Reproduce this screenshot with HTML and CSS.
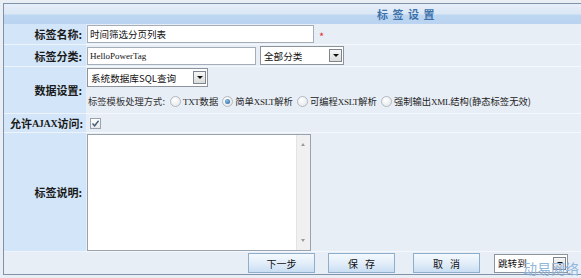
FILE: index.html
```html
<!DOCTYPE html>
<html lang="zh">
<head>
<meta charset="utf-8">
<title>标签设置</title>
<link rel="stylesheet" href="styles.css">
</head>
<body>
<div class="box">
  <div class="header">标 签 设 置</div>
  <div class="form">
    <div class="label r1">标签名称:</div>
    <div class="value r1">
      <span class="input w-name">时间筛选分页列表</span>
      <span class="req">*</span>
    </div>

    <div class="label r2">标签分类:</div>
    <div class="value r2">
      <span class="input w-tag mono">HelloPowerTag</span>
      <span class="select w-cat"><span class="sel-text">全部分类</span><span class="arrow"></span></span>
    </div>

    <div class="label r3">数据设置:</div>
    <div class="value r3 stack">
      <span class="select w-src"><span class="sel-text">系统数据库SQL查询</span><span class="arrow"></span></span>
      <div class="radios">
        <span class="rtitle">标签模板处理方式:</span>
        <span class="radio"></span><span class="rlabel"><span class="lat">TXT</span>数据</span>
        <span class="radio on"></span><span class="rlabel">简单<span class="lat">XSLT</span>解析</span>
        <span class="radio"></span><span class="rlabel">可编程<span class="lat">XSLT</span>解析</span>
        <span class="radio"></span><span class="rlabel">强制输出<span class="lat">XML</span>结构(静态标签无效)</span>
      </div>
    </div>

    <div class="label r4 wide">允许<span class="lat">AJAX</span>访问:</div>
    <div class="value r4">
      <span class="check">
        <svg width="9" height="9" viewBox="0 0 9 9"><path d="M1.5 4.5 L3.6 6.8 L7.6 1.8" fill="none" stroke="#4a5d78" stroke-width="1.4"/></svg>
      </span>
    </div>

    <div class="label r5">标签说明:</div>
    <div class="value r5">
      <div class="textarea">
        <div class="scroll">
          <span class="sarrow up"></span>
          <span class="sarrow down"></span>
        </div>
      </div>
    </div>

    <div class="footer">
      <span class="btn">下一步</span>
      <span class="btn spaced">保 存</span>
      <span class="btn spaced">取 消</span>
      <span class="select w-jump"><span class="sel-text">跳转到</span><span class="arrow"></span></span>
    </div>
  </div>
</div>
<div class="watermark">动易网络</div>
</body>
</html>
```

FILE: styles.css
```css
html, body {
  margin: 0;
  padding: 0;
}
body {
  width: 581px;
  height: 278px;
  overflow: hidden;
  background: #e9eef5;
  font-family: "Noto Sans CJK SC", "Liberation Sans", sans-serif;
  font-size: 10px;
  color: #111;
  position: relative;
}
.box {
  margin: 3px 0 0 3px;
  width: 578px;
  height: 270px;
  border: 1px solid #7f93ab;
  border-right: none;
  background: #e8eef6;
  overflow: hidden;
}
.header {
  height: 20px;
  line-height: 20px;
  background: linear-gradient(#e6eef9 0%, #dbe7f5 50%, #bdd6f1 55%, #b9d3f0 100%);
  color: #3e72ab;
  font-weight: bold;
  font-size: 11px;
  letter-spacing: 1px;
  padding-left: 373px;
  box-sizing: border-box;
  white-space: nowrap;
}
.form {
  display: grid;
  grid-template-columns: 82px 1fr;
  grid-template-rows: 21px 22px 47px 19px 119px 22px;
}
.label {
  background: #d3e5f8;
  border-bottom: 1px solid #eef4fb;
  font-weight: bold;
  padding-right: 4px;
  display: flex;
  align-items: center;
  justify-content: flex-end;
  white-space: nowrap;
  font-size: 11px;
  color: #1a1a1a;
}
.label.wide {
  padding-right: 3px;
}
.value {
  background: #e8eef6;
  border-bottom: 1px solid #f5f8fc;
  display: flex;
  align-items: center;
  padding-left: 1px;
  white-space: nowrap;
}
.value.stack {
  flex-direction: column;
  align-items: flex-start;
  justify-content: flex-start;
  padding-top: 1px;
  gap: 7px;
}
.input {
  display: inline-flex;
  align-items: center;
  height: 18px;
  box-sizing: border-box;
  background: #fff;
  border: 1px solid #a4adb8;
  padding-left: 2px;
  font-size: 9.5px;
  white-space: nowrap;
}
.w-name { width: 227px; }
.w-tag { width: 169px; }
.mono {
  font-family: "Liberation Serif", serif;
  font-size: 9px;
  letter-spacing: 0;
}
.req {
  color: #e0343a;
  margin-left: 5px;
  font-size: 11px;
  margin-top: 4px;
}
.select {
  display: inline-flex;
  align-items: center;
  justify-content: space-between;
  height: 19px;
  box-sizing: border-box;
  background: #fff;
  border: 1px solid #8d949c;
  padding: 0 1px 0 3px;
  font-size: 9.6px;
  white-space: nowrap;
}
.w-cat { width: 84px; margin-left: 4px; }
.w-src { width: 121px; }
.w-jump { width: 74px; margin-left: 14px; }
.arrow {
  width: 13px;
  height: 13px;
  flex: none;
  box-sizing: border-box;
  border: 1px solid #7d8590;
  background: linear-gradient(#f6f6f6, #dcdcdc);
  position: relative;
}
.arrow::after {
  content: "";
  position: absolute;
  left: 3px;
  top: 4px;
  border-left: 3px solid transparent;
  border-right: 3px solid transparent;
  border-top: 3px solid #111;
}
.radios {
  display: flex;
  align-items: center;
  font-size: 9.3px;
  color: #333;
  white-space: nowrap;
  padding-left: 1px;
}
.rtitle { margin-right: 5px; }
.radio {
  width: 11px;
  height: 11px;
  flex: none;
  box-sizing: border-box;
  border-radius: 50%;
  border: 1px solid #b4b9c0;
  background: radial-gradient(circle at 40% 35%, #ffffff, #dfe3e8);
  margin-right: 2px;
  position: relative;
}
.radio.on::after {
  content: "";
  position: absolute;
  left: 2px;
  top: 2px;
  width: 5px;
  height: 5px;
  border-radius: 50%;
  background: radial-gradient(circle at 40% 35%, #8fc0e6, #1d5c94);
}
.rlabel { margin-right: 4px; color: #222; }
.lat {
  font-family: "Liberation Serif", serif;
  font-size: 9px;
  letter-spacing: -0.3px;
}
.label .lat { font-weight: bold; font-size: 10px; }
.check {
  width: 11px;
  height: 11px;
  box-sizing: border-box;
  border: 1px solid #9aa3ad;
  background: linear-gradient(#ffffff, #e6e8ec);
  margin-left: 3px;
  display: inline-flex;
  align-items: center;
  justify-content: center;
}
.textarea {
  width: 224px;
  height: 117px;
  box-sizing: border-box;
  border: 1px solid #9aa3ad;
  background: #fff;
  display: flex;
  justify-content: flex-end;
}
.scroll {
  width: 13px;
  height: 100%;
  background: #f0f0f0;
  border-left: 1px solid #e4e4e4;
  position: relative;
}
.sarrow {
  position: absolute;
  left: 4px;
  border-left: 2px solid transparent;
  border-right: 2px solid transparent;
}
.sarrow.up { top: 8px; border-bottom: 3px solid #9a9a9a; }
.sarrow.down { bottom: 8px; border-top: 3px solid #9a9a9a; }
.footer {
  grid-column: 1 / 3;
  background: #e8eef6;
  display: flex;
  align-items: center;
  padding-left: 244px;
}
.btn {
  width: 67px;
  height: 20px;
  flex: none;
  box-sizing: border-box;
  border: 1px solid #8eaecb;
  background: linear-gradient(#f4f9fe 0%, #e3eef9 50%, #c9def3 100%);
  display: inline-flex;
  align-items: center;
  justify-content: center;
  font-size: 10px;
  color: #111;
  white-space: pre;
}
.btn.spaced { word-spacing: 5px; }
.btn:nth-child(2) { margin-left: 13px; }
.btn:nth-child(3) { margin-left: 18px; }
.watermark {
  position: absolute;
  left: 523px;
  top: 260px;
  color: #93b6dc;
  font-size: 14px;
  white-space: nowrap;
  line-height: 17px;
}
```
